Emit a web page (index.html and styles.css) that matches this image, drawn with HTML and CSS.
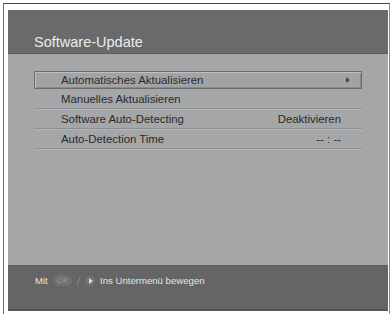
FILE: index.html
```html
<!DOCTYPE html>
<html lang="de">
<head>
    <meta charset="UTF-8">
    <meta name="viewport" content="width=device-width, initial-scale=1.0">
    <title>Software-Update</title>
    <link rel="stylesheet" href="styles.css">
</head>
<body>
<div class="frame">
    <div class="screen">
        <div class="header">
            <h1>Software-Update</h1>
        </div>

        <div class="content">
            <ul class="menu">
                <li class="item active">
                    <span class="label">Automatisches Aktualisieren</span>
                    <span class="arrow"></span>
                </li>
                <li class="item">
                    <span class="label">Manuelles Aktualisieren</span>
                </li>
                <li class="item">
                    <span class="label">Software Auto-Detecting</span>
                    <span class="value">Deaktivieren</span>
                </li>
                <li class="item">
                    <span class="label">Auto-Detection Time</span>
                    <span class="value">-- : --</span>
                </li>
            </ul>
        </div>

        <!-- Hinweiszeile -->
        <div class="footer">
            <span>Mit</span>
            <span class="key-ok">OK</span>
            <span class="slash">/</span>
            <span class="key-right"></span>
            <span>Ins Untermenü bewegen</span>
        </div>
    </div>
</div>
</body>
</html>
```

FILE: styles.css
```css
/* -------- OSD Menü -------- */
:root {
    --head: #696a6b;
    --body: #a5a6a8;
    --foot: #656565;
    --line: #8d8e90;
    --text: #2b2b2b;
}
body {
    margin: 0;
    background: #fff;
    font-family: "Liberation Sans", Arial, sans-serif;
}
.frame {
    margin: 3px 2px 0 3px;
    border-left: 1px solid #6a6a6a;
    border-top: 1px solid #444;
    border-right: 1px solid #8a8a8a;
    padding: 6px 1px 0 4px;
    height: 311px;
    box-sizing: border-box;
}
.screen {
    height: 301px;
    display: flex;
    flex-direction: column;
    background: var(--body);
}
.header {
    height: 44px;
    background: var(--head);
    border-bottom: 1px solid #5a5a5a;
    display: flex;
    align-items: flex-end;
    box-sizing: border-box;
}
h1 {
    margin: 0 0 3px 26px;
    font-weight: normal;
    font-size: 14.5px;
    color: #ececec;
}
.content { flex: 1; padding: 17px 26px 0 26px; }
.menu { list-style: none; margin: 0; padding: 0; }
.item {
    display: flex;
    align-items: center;
    height: 20px;
    padding: 0 21px 0 27px;
    border-bottom: 1px solid var(--line);
    box-shadow: 0 1px 0 #b4b5b7;
    font-size: 11.4px;
    color: var(--text);
    box-sizing: border-box;
}
.item .label { flex: 1; }
.item.active {
    height: 18px;
    border: 1px solid #6c6c6e;
    box-shadow: inset 1px 1px 0 #c0c0c2, inset -1px -1px 0 #8a8a8c;
    background: #a2a3a5;
    padding: 0 11px 0 26px;
}
.arrow {
    width: 0; height: 0;
    border-left: 4px solid #444;
    border-top: 3px solid transparent;
    border-bottom: 3px solid transparent;
}
.footer {
    height: 46px;
    background: var(--foot);
    border-top: 1px solid #5c5c5c;
    border-bottom: 2px solid #555;
    box-sizing: border-box;
    display: flex;
    align-items: center;
    padding: 0 0 14px 27px;
    gap: 5px;
    font-size: 9.6px;
    color: #e4e4e4;
}
.key-ok {
    font-style: italic;
    font-size: 8px;
    color: #9a9a9a;
    background: #707070;
    border-radius: 6px;
    padding: 1px 4px;
}
.slash { color: #9a9a9a; font-style: italic; }
.key-right {
    width: 10px; height: 10px;
    border-radius: 50%;
    background: #737373;
    position: relative;
}
.key-right::after {
    content: "";
    position: absolute;
    left: 4px; top: 2px;
    border-left: 4px solid #ddd;
    border-top: 3px solid transparent;
    border-bottom: 3px solid transparent;
}
```
